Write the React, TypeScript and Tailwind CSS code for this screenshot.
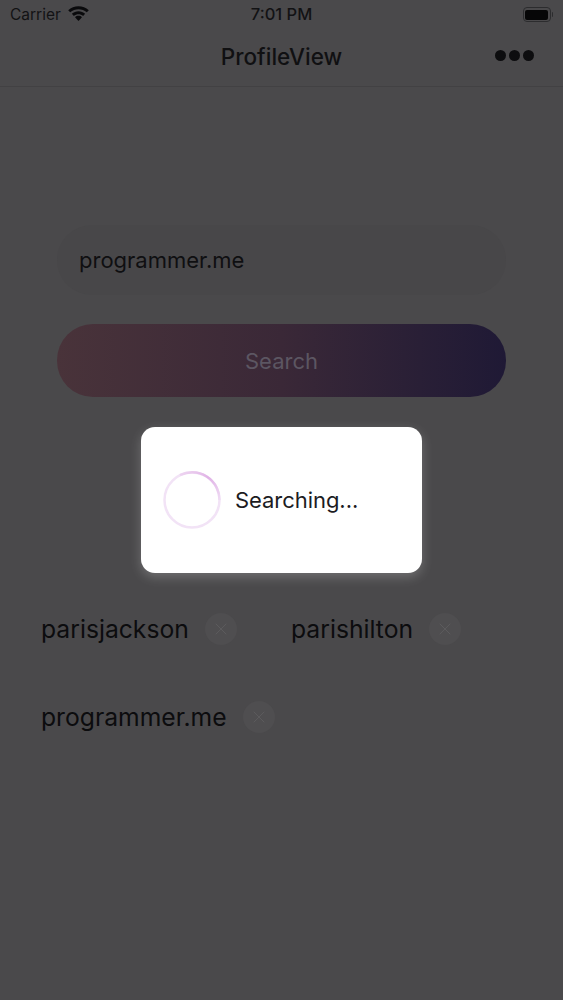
import { X } from 'lucide-react'

const tags = [
  ['parisjackson', 'parishilton'],
  ['programmer.me'],
]

function Tag({ label, wide }: { label: string; wide: boolean }) {
  return (
    <div className={`flex items-center h-[44px] ${wide ? 'w-[250px]' : ''}`}>
      <span className="text-[24.700px] leading-none text-[#0c0c0e]">{label}</span>
      <span className="ml-[16px] flex h-[32px] w-[32px] items-center justify-center rounded-full bg-[#4f4e50]">
        <X size={20} strokeWidth={1.2} className="text-[#5c5b5d]" />
      </span>
    </div>
  )
}

function Spinner() {
  return (
    <svg width="60" height="60" viewBox="0 0 60 60" className="shrink-0">
      <defs>
        <linearGradient id="arc" x1="0" y1="0" x2="1" y2="1">
          <stop offset="0" stopColor="#eed6f1" />
          <stop offset="0.45" stopColor="#e0b2e6" />
          <stop offset="1" stopColor="#f0dcf4" />
        </linearGradient>
      </defs>
      <circle cx="30" cy="30" r="27.5" fill="none" stroke="#f2e3f6" strokeWidth="2.5" />
      <path d="M18 5 A27.5 27.5 0 0 1 57.5 30" fill="none" stroke="url(#arc)" strokeWidth="2.5" />
    </svg>
  )
}

export default function App() {
  return (
    <div className="relative h-[1000px] w-[563px] overflow-hidden bg-[#4a494b] font-['Inter',sans-serif]">
      <div className="relative flex h-[29px] items-center justify-between px-[10px] text-[#121214]">
        <div className="flex items-center gap-[7px]">
          <span className="text-[15.500px]">Carrier</span>
          <svg width="21" height="16" viewBox="0 0 20 15" fill="#0a0a0c" className="-mt-[3px]">
            <path d="M10 1C6.300 1 2.900 2.400.2 4.800l1.900 2.100C4.300 5 7.100 3.900 10 3.900s5.700 1.100 7.900 3l1.900-2.100C17.100 2.400 13.700 1 10 1z" />
            <path d="M10 5.800c-2.400 0-4.600.9-6.300 2.400l1.900 2.100c1.200-1.100 2.800-1.700 4.400-1.700s3.200.6 4.400 1.700l1.900-2.100C14.600 6.700 12.400 5.800 10 5.800z" />
            <path d="M10 10.200c-1.300 0-2.400.5-3.300 1.300L10 15l3.300-3.500c-.9-.8-2-1.300-3.300-1.300z" />
          </svg>
        </div>
        <span className="absolute left-1/2 -translate-x-1/2 text-[16.500px] font-medium">7:01 PM</span>
        <div className="flex items-center gap-[1px]">
          <div className="flex h-[15px] w-[28px] items-center rounded-[4px] border border-[#2c2c2e] p-[1.500px]">
            <div className="h-full w-full rounded-[2px] bg-[#060607]" />
          </div>
          <div className="h-[5px] w-[1.500px] rounded-r bg-[#2c2c2e]" />
        </div>
      </div>

      <header className="relative flex h-[58px] items-center justify-center border-b border-[#424143]">
        <h1 className="text-[22.500px] font-medium leading-none text-[#101012]">ProfileView</h1>
        <div className="absolute right-[29px] top-[21px] flex gap-[3px]">
          <span className="h-[11px] w-[11px] rounded-full bg-[#0d0d0f]" />
          <span className="h-[11px] w-[11px] rounded-full bg-[#0d0d0f]" />
          <span className="h-[11px] w-[11px] rounded-full bg-[#0d0d0f]" />
        </div>
      </header>

      <main className="px-[57px] pt-[138px]">
        <div className="flex h-[70px] w-[449px] items-center rounded-[35px] bg-[#484749] px-[22px] text-[22px] text-[#0f0f11]">
          programmer.me
        </div>
        <button className="mt-[29px] flex h-[73px] w-[449px] items-center justify-center rounded-[36px] bg-gradient-to-r from-[#49333a] via-[#3a2837] to-[#1f1935] pt-[2px] text-[22px] text-[#5c5662]">
          Search
        </button>
      </main>

      <div className="absolute left-[41px] top-[607px] flex flex-col gap-[44px]">
        {tags.map((row) => (
          <div key={row[0]} className="flex">
            {row.map((t) => (
              <Tag key={t} label={t} wide={row.length > 1 && t === row[0]} />
            ))}
          </div>
        ))}
      </div>

      <div className="absolute left-[141px] top-[427px] flex h-[146px] w-[281px] items-center gap-[13px] rounded-[14px] bg-white pl-[21px] shadow-[0_4px_12px_rgba(255,255,255,0.22)]">
        <Spinner />
        <span className="text-[22px] tracking-[-0.05px] text-[#1c1c1f]">Searching...</span>
      </div>
    </div>
  )
}
